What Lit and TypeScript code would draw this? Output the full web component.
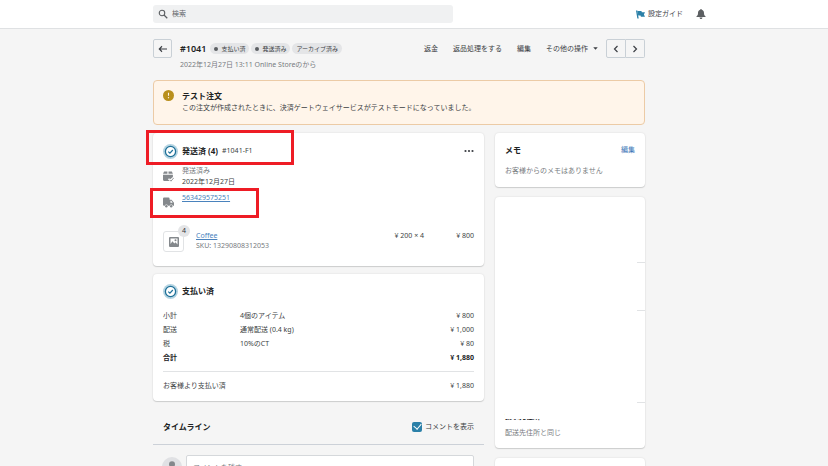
import { LitElement, html, css, svg } from "lit";
import { customElement, property } from "lit/decorators.js";

const paths: Record<string, unknown> = {
  search: svg`<circle cx="8" cy="8" r="5.500" fill="none" stroke="currentColor" stroke-width="2.200"/><path d="M12 12l6.500 6.500" stroke="currentColor" stroke-width="2.600"/>`,
  flag: svg`<path d="M0 1h3l3 18H3z"/><path d="M3 2h9l1 3h7l-2.500 5L20 15h-9l-1-3H5z"/>`,
  bell: svg`<path d="M10 0c1 0 1.600.700 1.600 1.700C14.500 2.500 16 5 16 8c0 3.500.800 5 3 6.500V16H1v-1.500C3.200 13 4 11.500 4 8c0-3 1.500-5.500 4.400-6.300C8.400.700 9 0 10 0zM7 17h6c0 1.800-1.300 3-3 3s-3-1.200-3-3z"/>`,
  back: svg`<path d="M18 10H3M8 4.500L2.500 10 8 15.500" fill="none" stroke="currentColor" stroke-width="2.200"/>`,
  prev: svg`<path d="M13 4l-6 6 6 6" fill="none" stroke="currentColor" stroke-width="2.400"/>`,
  next: svg`<path d="M7 4l6 6-6 6" fill="none" stroke="currentColor" stroke-width="2.400"/>`,
  caret: svg`<path d="M1 5h18l-9 10z"/>`,
  alert: svg`<circle cx="10" cy="10" r="10"/><path d="M10 5v5.500" stroke="#fff5ea" stroke-width="2"/><circle cx="10" cy="14" r="1.200" fill="#fff5ea"/>`,
  done: svg`<circle cx="10" cy="10" r="10" fill="#b4d3e1"/><circle cx="10" cy="10" r="6.800" fill="#fff" stroke="#1f7199" stroke-width="1.700"/><path d="M7 10.200l2.200 2.100 3.900-4.300" fill="none" stroke="#1f7199" stroke-width="1.600"/>`,
  dots: svg`<circle cx="3" cy="10" r="2.200"/><circle cx="10" cy="10" r="2.200"/><circle cx="17" cy="10" r="2.200"/>`,
  box: svg`<path d="M2 1h6v4H0zM10 1h6l2 4h-8zM0 7h18v4l-5 4-2-2-2 2 3 3H2q-2 0-2-2z"/><path d="M12 16l2.500 2.500L19.500 12.500" fill="none" stroke="currentColor" stroke-width="1.600"/>`,
  truck: svg`<path d="M2 1h8q2 0 2 2v2h3.500l4.500 5.500V16h-2.300a2.900 2.900 0 0 0-5.600 0H8.900a2.900 2.900 0 0 0-5.600 0H2q-2 0-2-2V3q0-2 2-2z"/><path d="M13.500 7h1.500l2.600 3.400h-4.100z" fill="#fff"/><circle cx="6.100" cy="16.800" r="2.200"/><circle cx="14.900" cy="16.800" r="2.200"/>`,
  image: svg`<rect x="0" y="0" width="20" height="20" rx="2"/><path d="M3 3h14v12l-4-4.500-2.500 2.500L7 8.500 3 14z" fill="#fff"/><circle cx="13" cy="6.500" r="2"/><path d="M3 17l4-6 6 6z"/>`,
  person: svg`<circle cx="10" cy="6.500" r="6"/><path d="M2 20c0-5 3.500-6 8-6s8 1 8 6z"/>`,
};

@customElement("ui-icon")
export class UiIcon extends LitElement {
  @property() name = "";
  static styles = css`
    :host { display: block; flex: none; width: 10px; height: 10px; }
    svg { display: block; width: 100%; height: 100%; fill: currentColor; }
  `;
  render() {
    return html`<svg viewBox="0 0 20 20" aria-hidden="true">${paths[this.name]}</svg>`;
  }
}

@customElement("app-root")
export class AppRoot extends LitElement {
  static styles = css`
    :host {
      display: block; height: 100vh; overflow: hidden; background: #f5f5f5; color: #3c3f44;
      font: 7px/10px "Noto Sans", "Noto Sans CJK JP", sans-serif;
    }
    * { box-sizing: border-box; }
    h1, h2, p { margin: 0; }
    h2 { font-size: 8px; line-height: 12px; font-weight: 700; color: #202223; white-space: nowrap; }
    button, input { font: inherit; color: inherit; margin: 0; }
    button { border: 0; padding: 0; background: none; white-space: nowrap; }
    a { color: #4a83bd; text-decoration: underline; }
    .row { display: flex; align-items: center; }
    .between { justify-content: space-between; }
    .muted { color: #777b80; }

    header { display: grid; grid-template-columns: 153fr minmax(0, 553px) 122fr; height: 29px; background: #fff; border-bottom: 1px solid #dfe1e3; }
    .bar { grid-column: 2; }
    .search { width: 300px; height: 18px; gap: 4px; padding: 0 5px; border-radius: 3px; background: #f0f1f2; color: #5c5f62; }
    .search input { flex: 1; min-width: 0; border: 0; padding: 0; background: none; outline: 0; }
    .search input::placeholder { color: #606468; opacity: 1; }
    .tools { gap: 13px; }
    .guide { display: flex; align-items: center; gap: 3px; color: #404347; text-decoration: none; }
    .flag { width: 9px; height: 9px; color: #2b80a8; }
    .bell { color: #5c5f62; }

    main { display: grid; grid-template-columns: 153fr minmax(0, 492px) 183fr; }
    .page { grid-column: 2; padding-top: 10px; }
    .square { display: grid; place-items: center; width: 19px; height: 19px; border: 1px solid #c9d0d6; border-radius: 2px; }
    .title { height: 19px; }
    h1 { margin: 0 4px 0 8px; font-size: 9px; line-height: 12px; font-weight: 600; color: #202223; }
    .badges { display: flex; gap: 2px; }
    .badge { display: flex; align-items: center; gap: 3px; height: 11px; padding: 0 4px; border-radius: 6px; background: #e4e5e7; font-size: 6px; white-space: nowrap; }
    .dot { width: 4px; height: 4px; border-radius: 2px; background: #5c5f62; }
    .actions { display: flex; align-items: center; gap: 15px; margin-left: auto; }
    .more { display: flex; align-items: center; gap: 5px; }
    .caret { width: 5px; height: 5px; }
    .pager { display: flex; margin-left: 8px; }
    .pager .square { width: 20px; border-radius: 2px 0 0 2px; }
    .pager .square + .square { width: 19px; border-left: 0; border-radius: 0 2px 2px 0; }
    .date { margin: 2px 0 10px 27px; }

    .banner { display: grid; grid-template-columns: 11px 1fr; gap: 0 8px; padding: 9px 9px 10px; border: 1px solid #eccba6; border-radius: 4px; background: #fff5ea; }
    .alert { width: 11px; height: 11px; color: #b98f1c; }
    .banner p { grid-column: 2; line-height: 12px; }

    .columns { display: grid; grid-template-columns: minmax(0, 1fr) 150px; gap: 11px; margin-top: 8px; align-items: start; }
    .stack { display: grid; gap: 10px; }
    .stack.tight { gap: 8px; }
    .card { border-radius: 4px; background: #fff; box-shadow: 0 0 2px #1719181f, 0 1px 1px #17191826; }
    .order { padding: 8px 10px 14px; }
    .head { position: relative; height: 20px; gap: 4px; }
    .done { width: 15px; height: 15px; }
    .head .menu { margin-left: auto; }
    .fact { display: grid; grid-template-columns: 11px 1fr; gap: 8px; align-items: center; margin-top: 4px; line-height: 11px; }
    .fact ui-icon { width: 11px; height: 11px; color: #84888c; }
    .tracking { position: relative; height: 20px; margin-top: 5px; }
    .tracking a { align-self: start; justify-self: start; }
    .mark { position: absolute; border: 3px solid #ee1c25; pointer-events: none; }
    .mark.wide { inset: -11px auto auto -17px; width: 148px; height: 35px; }
    .mark.narrow { inset: -4px auto auto -13px; width: 109px; height: 30px; }
    .product { display: grid; grid-template-columns: 21px 1fr auto 38px; column-gap: 12px; align-items: start; margin-top: 19px; }
    .thumb { position: relative; display: grid; place-items: center; height: 21px; border: 1px solid #e1e3e5; border-radius: 3px; color: #84888c; }
    .count { position: absolute; top: -7px; right: -7px; width: 12px; height: 12px; border-radius: 6px; background: #e4e5e7; color: #303338; line-height: 12px; text-align: center; }
    .product .sum { text-align: right; }

    .payment { padding: 7px 10px 8px; }
    table { width: 100%; margin-top: 8px; border-collapse: collapse; }
    th, td { height: 14px; padding: 0; font-weight: 400; text-align: left; }
    th { width: 77px; }
    td:last-child { text-align: right; }
    .total th, .total td { font-weight: 700; color: #202223; }
    .paid { margin-top: 6px; padding-top: 7px; border-top: 1px solid #e1e3e5; line-height: 14px; }

    .timeline { margin-top: 9px; padding: 0 10px 9px; height: 27px; border-bottom: 1px solid #ccd1d8; }
    .check { display: flex; align-items: center; gap: 3px; }
    .check input { appearance: none; display: grid; place-items: center; width: 10px; height: 10px; border-radius: 2px; background: #2b80a8; }
    .check input:checked::after { content: ""; width: 4px; height: 6px; margin-bottom: 2px; border: solid #fff; border-width: 0 1px 1px 0; transform: rotate(40deg); }
    .composer { display: flex; gap: 4px; padding: 0 10px 0 9px; margin-top: 2px; }
    .avatar { display: grid; place-items: center; width: 20px; height: 20px; margin-top: 2px; border-radius: 10px; background: #e0e1e4; color: #84888c; }
    .avatar ui-icon { margin-bottom: 2px; }
    .composer input { flex: 1; min-width: 0; height: 24px; padding: 0 6px; border: 1px solid #d5d8db; border-radius: 2px 2px 0 0; background: #fff; }
    .composer input::placeholder { color: #777b80; opacity: 1; }

    .memo { padding: 8px 10px 10px; }
    .memo .row { height: 18px; margin-bottom: 6px; }
    .memo p { line-height: 12px; }
    .memo button { color: #3d78b8; }
    .section { display: flex; justify-content: flex-end; align-items: flex-end; }
    .section::after { content: ""; width: 8px; height: 1px; background: #e1e3e5; }
    .contact { height: 66px; }
    .phone { height: 48px; }
    .shipping { height: 92px; }
    .billing { padding: 9px 10px 9px; }
    .billing h2 { position: relative; font-size: 7px; line-height: 10px; }
    .billing h2::after { content: ""; position: absolute; inset: -2px 0 3px; background: #fff; }
    .billing p { margin-top: 5px; line-height: 12px; }
    .next { height: 40px; }
  `;

  private lines = [
    ["小計", "4個のアイテム", "¥ 800"],
    ["配送", "通常配送 (0.4 kg)", "¥ 1,000"],
    ["税", "10%のCT", "¥ 80"],
    ["合計", "", "¥ 1,880"],
  ];

  render() {
    return html`
      <header>
        <div class="bar row between">
          <label class="search row"><ui-icon name="search"></ui-icon><input type="search" aria-label="検索" placeholder="検索"></label>
          <div class="tools row">
            <a class="guide" href="#guide"><ui-icon class="flag" name="flag"></ui-icon>設定ガイド</a>
            <button aria-label="通知"><ui-icon class="bell" name="bell"></ui-icon></button>
          </div>
        </div>
      </header>
      <main>
        <div class="page">
          <div class="title row">
            <button class="square" aria-label="戻る"><ui-icon name="back"></ui-icon></button>
            <h1>#1041</h1>
            <div class="badges">
              <span class="badge"><i class="dot"></i>支払い済</span>
              <span class="badge"><i class="dot"></i>発送済み</span>
              <span class="badge">アーカイブ済み</span>
            </div>
            <div class="actions">
              <button>返金</button>
              <button>返品処理をする</button>
              <button>編集</button>
              <button class="more">その他の操作<ui-icon class="caret" name="caret"></ui-icon></button>
            </div>
            <div class="pager">
              <button class="square" aria-label="前へ"><ui-icon name="prev"></ui-icon></button>
              <button class="square" aria-label="次へ"><ui-icon name="next"></ui-icon></button>
            </div>
          </div>
          <p class="date muted">2022年12月27日 13:11 Online Storeのから</p>

          <section class="banner">
            <ui-icon class="alert" name="alert"></ui-icon>
            <h2>テスト注文</h2>
            <p>この注文が作成されたときに、決済ゲートウェイサービスがテストモードになっていました。</p>
          </section>

          <div class="columns">
            <div class="stack tight">
              <section class="card order">
                <div class="head row">
                  <ui-icon class="done" name="done"></ui-icon>
                  <h2>発送済 (4)</h2>
                  <span>#1041-F1</span>
                  <button class="menu" aria-label="その他"><ui-icon name="dots"></ui-icon></button>
                  <span class="mark wide"></span>
                </div>
                <div class="fact">
                  <ui-icon name="box"></ui-icon>
                  <div><p class="muted">発送済み</p><p>2022年12月27日</p></div>
                </div>
                <div class="fact tracking">
                  <ui-icon name="truck"></ui-icon>
                  <a href="#tracking">563429575251</a>
                  <span class="mark narrow"></span>
                </div>
                <div class="product">
                  <div class="thumb"><ui-icon name="image"></ui-icon><span class="count">4</span></div>
                  <div><a href="#coffee">Coffee</a><p class="muted">SKU: 13290808312053</p></div>
                  <span>¥ 200 × 4</span>
                  <span class="sum">¥ 800</span>
                </div>
              </section>

              <section class="card payment">
                <div class="head row"><ui-icon class="done" name="done"></ui-icon><h2>支払い済</h2></div>
                <table>
                  <tbody>
                    ${this.lines.map(([name, note, sum], i) => html`
                      <tr class=${i === 3 ? "total" : ""}><th scope="row">${name}</th><td>${note}</td><td>${sum}</td></tr>`)}
                  </tbody>
                </table>
                <div class="paid row between"><span>お客様より支払い済</span><span>¥ 1,880</span></div>
              </section>

              <div class="timeline row between">
                <h2>タイムライン</h2>
                <label class="check"><input type="checkbox" checked>コメントを表示</label>
              </div>
              <div class="composer">
                <span class="avatar"><ui-icon name="person"></ui-icon></span>
                <input type="text" aria-label="コメント" placeholder="コメントを残す">
              </div>
            </div>

            <aside class="stack">
              <section class="card memo">
                <div class="row between"><h2>メモ</h2><button>編集</button></div>
                <p class="muted">お客様からのメモはありません</p>
              </section>
              <section class="card">
                <div class="section contact"></div>
                <div class="section phone"></div>
                <div class="section shipping"></div>
                <div class="billing"><h2>請求先住所</h2><p class="muted">配送先住所と同じ</p></div>
              </section>
              <section class="card next"></section>
            </aside>
          </div>
        </div>
      </main>
    `;
  }
}
